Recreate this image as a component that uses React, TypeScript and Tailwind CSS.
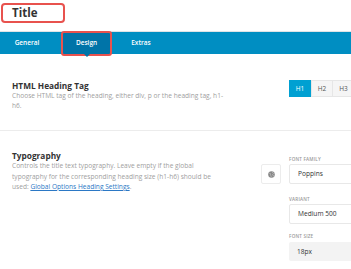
import React from "react";

export default function App() {
  const font = { fontFamily: '"Open Sans", "Noto Sans", sans-serif' };
  return (
    <div className="w-[351px] h-[269px] overflow-hidden bg-white relative" style={font}>
      {/* Header */}
      <div className="h-[31px] pt-[3px] pl-[1px]">
        <div className="w-[64px] h-[20px] border-2 border-[#e8524e] rounded-[4px] flex items-center pl-[9px]">
          <span className="text-[11.5px] font-bold text-[#333] leading-none">Title</span>
        </div>
      </div>
      {/* Tabs */}
      <div className="h-[23px] border-t border-[#dfe3e6] bg-[#008ec2] flex text-white text-[6.5px] font-semibold">
        <div className="w-[54px] flex items-center justify-center">General</div>
        <div className="w-[8px]" />
        <div className="w-[49px] bg-[#0074a8] flex items-center justify-center relative">
          Design
          <div className="absolute left-[-1px] right-[-1px] top-[-1px] bottom-[-2px] border-2 border-[#e8524e] rounded-[3px]" />
          <div className="absolute left-1/2 -translate-x-1/2 bottom-[-3px] w-0 h-0 border-l-[3px] border-r-[3px] border-t-[3px] border-l-transparent border-r-transparent border-t-[#0074a8]" />
        </div>
        <div className="w-[60px] flex items-center justify-center">Extras</div>
      </div>
      {/* Section 1 */}
      <div className="h-[77px] border-b border-[#ececec] flex pl-[12px]">
        <div className="w-[220px] shrink-0 pt-[26px]">
          <div className="text-[8.3px] font-bold text-[#333] leading-[11px]">HTML Heading Tag</div>
          <div className="text-[6.6px] text-[#a0a0a0] leading-[9.5px] mt-[0px]">
            Choose HTML tag of the heading, either div, p or the heading tag, h1-h6.
          </div>
        </div>
        <div className="shrink-0 pt-[26px] pl-[57px]">
          <div className="flex h-[17px] text-[6.5px]">
            <div className="w-[22px] bg-[#00a0d2] text-white flex items-center justify-center">H1</div>
            <div className="w-[22px] bg-[#f5f5f5] text-[#555] border border-[#e6e6e6] flex items-center justify-center">H2</div>
            <div className="w-[22px] bg-[#f5f5f5] text-[#555] border border-l-0 border-[#e6e6e6] flex items-center justify-center">H3</div>
          </div>
        </div>
      </div>
      {/* Section 2 */}
      <div className="flex pl-[12px]">
        <div className="w-[212px] shrink-0 pt-[19px]">
          <div className="text-[8.3px] font-bold text-[#333] leading-[11px]">Typography</div>
          <div className="text-[6.6px] text-[#a0a0a0] leading-[10.5px]">
            Controls the title text typography. Leave empty if the global typography for the corresponding heading size (h1-h6) should be used:{" "}
            <span className="text-[#2b78c5] underline">Global Options Heading Settings</span>.
          </div>
        </div>
        <div className="shrink-0 pl-[37px] pt-[33px]">
          <div className="w-[20px] h-[20px] border border-[#ececec] rounded-[2px] flex items-center justify-center">
            <svg width="7" height="7" viewBox="0 0 16 16">
              <circle cx="8" cy="8" r="7.5" fill="#888" />
              <path d="M3 5c2 0 3 1 3 2s-1 2 0 3 2 1 1 4M10 2c0 2 1 2 2 3s2 1 3 1M9 9c1-1 3-1 3 1s1 2 2 2" stroke="#ccc" strokeWidth="1.5" fill="none" />
            </svg>
          </div>
        </div>
        <div className="shrink-0 pl-[8px] pt-[25px]">
          <div className="text-[4.6px] font-semibold tracking-[0.2px] text-[#999] leading-[6px] uppercase">Font Family</div>
          <div className="mt-[2px] w-[100px] h-[20px] border border-[#e8e8e8] rounded-[2px] flex items-center pl-[8px] text-[6.6px] text-[#333]">Poppins</div>
          <div className="mt-[12px] text-[4.6px] font-semibold tracking-[0.2px] text-[#999] leading-[6px] uppercase">Variant</div>
          <div className="mt-[2px] w-[100px] h-[20px] border border-[#e8e8e8] rounded-[2px] flex items-center pl-[8px] text-[6.6px] text-[#333]">Medium 500</div>
          <div className="mt-[9px] text-[4.6px] font-semibold tracking-[0.2px] text-[#999] leading-[6px] uppercase">Font Size</div>
          <div className="mt-[3px] w-[100px] h-[19px] bg-[#f3f3f3] rounded-[2px] flex items-center pl-[8px] text-[6.6px] text-[#333]">18px</div>
        </div>
      </div>
    </div>
  );
}
